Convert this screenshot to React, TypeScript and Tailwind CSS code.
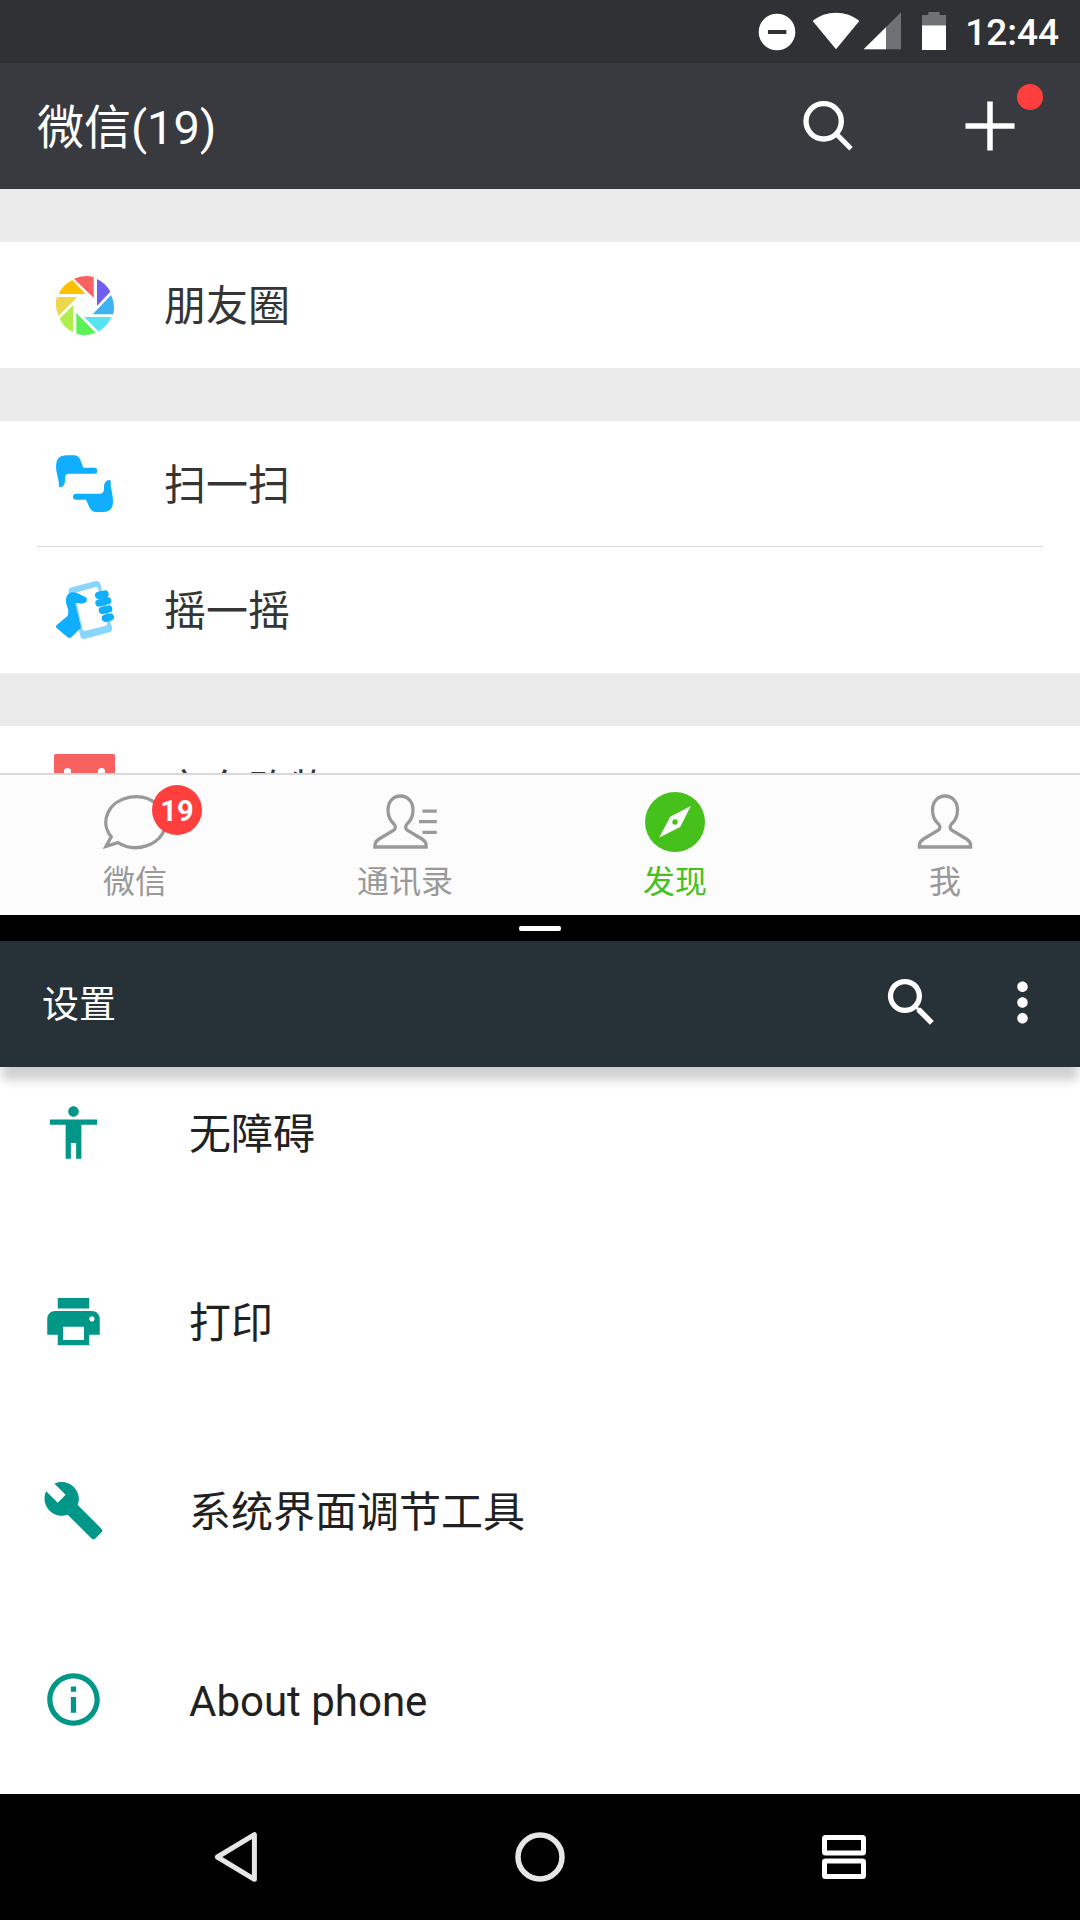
import type { ReactNode } from "react";
import { MdAccessibility, MdBuild, MdInfoOutline, MdMoreVert, MdPrint, MdSearch } from "react-icons/md";

const HEAD_PATH =
  "M27.5 5C19.5 5 15 11.5 15 19c0 6.5 2.6 11.2 6.2 14.3 1.6 1.6 1.6 4.4-.4 5.9L6 48c-3 1.9-4.1 3.6-4.1 6.2V56h51.2v-1.8c0-2.6-1.1-4.3-4.1-6.2l-14.8-8.800c-2-1.5-2-4.3-.4-5.9C37.4 30.2 40 25.5 40 19c0-7.5-4.5-14-12.5-14z";

/* Status bar */

function StatusBar() {
  return (
    <div className="flex h-[63px] shrink-0 items-center justify-end bg-[#303135] pr-[21px] text-white">
      <svg className="mr-4 h-[41px] w-[38px]" viewBox="114 33 114 123" aria-hidden>
        <circle cx="171" cy="96" r="55" fill="#fff" />
        <rect x="144" y="90" width="55" height="12" fill="#303135" />
      </svg>
      <svg className="mr-[3px] h-[41px] w-12" viewBox="276 33 144 123" aria-hidden>
        <path d="M278 63C298 46 322 38 348 38s50 8 70 25l-70 85z" fill="#fff" />
      </svg>
      <svg className="mr-[21px] h-[41px] w-[38px]" viewBox="429 33 114 123" aria-hidden>
        <path d="M543 37v111H431z" fill="#707174" />
        <path d="M498 82v66h-67z" fill="#fff" />
      </svg>
      <svg className="mr-[18px] h-[41px] w-[25px]" viewBox="606 33 75 123" aria-hidden>
        <path d="M625 36h34v9h19v31h-72V45h19z" fill="#707174" />
        <path d="M606 76h72v74h-72z" fill="#fff" />
      </svg>
      <time className="pt-0.5 text-[37px] leading-[44px] font-medium">12:44</time>
    </div>
  );
}

/* Discover list icons */

function MomentsIcon() {
  return (
    <svg className="size-[62px]" viewBox="162 642 186 186" aria-hidden>
      <path d="M222 656A88 88 0 0 1 281 651V713Z" fill="#f76260" />
      <path d="M291 657A88 88 0 0 1 331 695L291 738Z" fill="#6f5ef0" />
      <path d="M333 705A88 88 0 0 1 340 763H278Z" fill="#3eb2f0" />
      <path d="M335 771A88 88 0 0 1 295 814L252 771Z" fill="#56e3f2" />
      <path d="M287 818A88 88 0 0 1 229 821V759Z" fill="#5cf058" />
      <path d="M220 817A88 88 0 0 1 179 776L220 734Z" fill="#b1ee4d" />
      <path d="M176 768A88 88 0 0 1 170 711H232Z" fill="#edd84d" />
      <path d="M176 702A88 88 0 0 1 217 660L257 702Z" fill="#ffc000" />
    </svg>
  );
}

function ScanIcon() {
  return (
    <svg className="size-[62px]" viewBox="162 159 186 186" fill="#10aeff" aria-hidden>
      <path d="M198 166H219C231 166 237 170 241 180L250 203H283A9 9 0 0 1 283 221H206Q195 222 195 233C196 250 193 260 180 262Q177 262 177 258C177 235 168 222 168 197Q168 167 198 166Z" />
      <path d="M309 336H289C278 336 274 331 269 323L258 299H228A9 9 0 0 1 228 281H301Q312 280 312 268C311 252 315 242 328 240Q332 239 332 244C331 266 339 280 339 305Q339 335 309 336Z" />
    </svg>
  );
}

function ShakeIcon() {
  return (
    <svg className="size-[62px]" viewBox="162 537 186 186" aria-hidden>
      <path
        fillRule="evenodd"
        d="M215 562L287 543Q298 541 301 551L336 683Q338 694 328 697L256 716Q244 719 241 708L206 575Q204 565 215 562ZM223 579L248 688Q250 694 256 692L317 677Q323 675 321 669L294 565Q292 560 286 561Z"
        fill="#88d6ff"
      />
      <path
        d="M199 612C195 594 202 578 217 577C225 576 232 579 239 583L257 592Q263 595 260 602C257 611 249 612 225 608L243 683L214 712Q208 716 202 711L170 684Q165 680 170 675L200 650Q205 645 205 638C205 628 202 622 199 612Z"
        fill="#10aeff"
      />
      <path
        d="M296 586l19-4M297 609l26-7M307 631l19-4M316 655l15-4"
        stroke="#10aeff"
        strokeWidth="22"
        strokeLinecap="round"
      />
    </svg>
  );
}

function ShoppingIcon() {
  return (
    <svg className="h-[70px] w-[62px]" viewBox="0 0 62 70" aria-hidden>
      <rect width="61" height="70" rx="1.5" fill="#f76260" />
      <circle cx="13.500" cy="17.500" r="3.600" fill="#fff" />
      <circle cx="47.500" cy="17.500" r="3.600" fill="#fff" />
      <path d="M13.500 18c0 24 34 24 34 0" fill="none" stroke="#fff" strokeWidth="3" />
    </svg>
  );
}

function DiscoverRow({ icon, label, divided }: { icon: ReactNode; label: string; divided?: boolean }) {
  return (
    <li className="relative">
      <button type="button" className="flex h-[126px] w-full items-center gap-12 px-[54px] text-left">
        {icon}
        <span className="pt-1 text-[42px] leading-[50px]">{label}</span>
      </button>
      {divided && <div className="absolute inset-x-[37px] bottom-0 h-px bg-[#d9d9d9]" />}
    </li>
  );
}

/* Tab bar icons */

function ChatIcon() {
  return (
    <svg className="h-[62px] w-16" viewBox="0 0 64 62" fill="none" stroke="#999" strokeWidth="3.3" aria-hidden>
      <path d="M15 51.6L3 55.3L8.300 45.8A29.9 25.4 0 1 1 15 51.6Z" />
    </svg>
  );
}

function ContactsIcon() {
  return (
    <svg className="h-[62px] w-16" viewBox="0 0 64 62" fill="none" stroke="#999" strokeWidth="3.3" aria-hidden>
      <path d={HEAD_PATH} />
      <path d="M49.5 20.2h14.3M46 30.7h17.8M49.5 41.3h14.3" />
    </svg>
  );
}

function CompassIcon() {
  return (
    <svg className="h-[62px] w-16" viewBox="0 0 64 62" aria-hidden>
      <circle cx="32" cy="31" r="30" fill="#46c11b" />
      <path d="M47.8 15L37.2 36L16.2 46.5L27.2 25.7Z" fill="#fff" />
      <circle cx="32" cy="31" r="2.7" fill="#46c11b" />
    </svg>
  );
}

function MeIcon() {
  return (
    <svg className="h-[62px] w-16" viewBox="-4.5 0 64 62" fill="none" stroke="#999" strokeWidth="3.3" aria-hidden>
      <path d={HEAD_PATH} />
    </svg>
  );
}

const TABS = [
  { label: "微信", icon: <ChatIcon />, badge: 19 },
  { label: "通讯录", icon: <ContactsIcon /> },
  { label: "发现", icon: <CompassIcon />, active: true },
  { label: "我", icon: <MeIcon /> },
];

function WeChatPane() {
  return (
    <section className="flex min-h-0 grow basis-0 flex-col bg-[#ebebeb] text-[#353535]">
      <header className="flex h-[126px] shrink-0 items-center bg-[#393a3f] pr-[65px] pl-[37px] text-white">
        <h1 className="grow pt-1 text-[47px] leading-[56px]">微信(19)</h1>
        <div className="flex gap-28">
          <button type="button" aria-label="搜索">
            <svg className="size-[50px]" viewBox="249 303 150 150" fill="none" stroke="#fff" aria-hidden>
              <circle cx="311" cy="364" r="53" strokeWidth="16" />
              <path d="M350 403L393 446" strokeWidth="15" />
            </svg>
          </button>
          <button type="button" aria-label="更多" className="relative">
            <svg className="size-[50px]" viewBox="0 0 50 50" stroke="#fff" strokeWidth="5.5" aria-hidden>
              <path d="M.5 25h49M25 .5v49" />
            </svg>
            <span className="absolute -top-[17px] left-[52px] size-[26px] rounded-full bg-[#ff3e3e]" />
          </button>
        </div>
      </header>

      <main className="flex min-h-0 grow flex-col gap-[53px] overflow-hidden pt-[53px]">
        <ul className="shrink-0 bg-white">
          <DiscoverRow icon={<MomentsIcon />} label="朋友圈" />
        </ul>
        <ul className="shrink-0 bg-white">
          <DiscoverRow icon={<ScanIcon />} label="扫一扫" divided />
          <DiscoverRow icon={<ShakeIcon />} label="摇一摇" />
        </ul>
        <ul className="shrink-0 bg-white">
          <DiscoverRow icon={<ShoppingIcon />} label="京东购物" />
        </ul>
      </main>

      <nav className="flex h-[142px] shrink-0 border-t-2 border-[#d8d8d8] bg-[#fcfcfc]">
        {TABS.map((tab) => (
          <button key={tab.label} type="button" className="flex flex-1 flex-col items-center gap-2 pt-4">
            <span className="relative">
              {tab.icon}
              {tab.badge && (
                <span className="absolute -top-[6px] left-[49px] flex size-[50px] items-center justify-center rounded-full bg-[#ff3e3e] pt-0.5 text-[29px] leading-[34px] font-bold text-white">
                  {tab.badge}
                </span>
              )}
            </span>
            <span className={tab.active ? "text-[32px] leading-[42px] text-[#46c11b]" : "text-[32px] leading-[42px] text-[#999]"}>
              {tab.label}
            </span>
          </button>
        ))}
      </nav>
    </section>
  );
}

const SETTINGS = [
  { label: "无障碍", Icon: MdAccessibility },
  { label: "打印", Icon: MdPrint },
  { label: "系统界面调节工具", Icon: MdBuild },
  { label: "About phone", Icon: MdInfoOutline },
];

function SettingsPane() {
  return (
    <section className="flex min-h-0 grow basis-px flex-col bg-white text-[#212121]">
      <header className="relative z-10 flex h-[126px] shrink-0 items-center bg-[#263238] pr-[26px] pl-[42px] text-white shadow-[0_15px_10px_-2px_rgba(0,0,0,0.19)]">
        <h2 className="grow pt-1 text-[37px] leading-[44px]">设置</h2>
        <div className="flex gap-12 pb-1">
          <button type="button" aria-label="搜索设置">
            <MdSearch size={63} />
          </button>
          <button type="button" aria-label="更多选项">
            <MdMoreVert size={63} />
          </button>
        </div>
      </header>

      {/* scrolled to the end, so the first row slides under the header */}
      <ul className="flex min-h-0 grow flex-col justify-end">
        {SETTINGS.map(({ label, Icon }) => (
          <li key={label} className="shrink-0">
            <button type="button" className="flex h-[189px] w-full items-center gap-[84px] px-[42px] text-left">
              <Icon size={63} color="#009688" />
              <span className="pt-1 text-[42px] leading-[50px]">{label}</span>
            </button>
          </li>
        ))}
      </ul>
    </section>
  );
}

function NavigationBar() {
  return (
    <nav className="flex h-[126px] shrink-0 items-center bg-black px-[84px]">
      <button type="button" aria-label="返回" className="flex flex-1 justify-center">
        <svg className="size-[50px]" viewBox="0 0 50 50" fill="none" stroke="#e6e6e6" strokeWidth="5" strokeLinejoin="round" aria-hidden>
          <path d="M6.4 25L43.4 2.7V47.3Z" />
        </svg>
      </button>
      <button type="button" aria-label="主屏幕" className="flex flex-1 justify-center">
        <svg className="size-[50px]" viewBox="0 0 50 50" fill="none" stroke="#e6e6e6" strokeWidth="5.5" aria-hidden>
          <circle cx="25" cy="25" r="22" />
        </svg>
      </button>
      <button type="button" aria-label="最近任务" className="flex flex-1 justify-center">
        <svg className="size-[50px]" viewBox="0 0 50 50" fill="none" stroke="#fff" strokeWidth="5" aria-hidden>
          <rect x="5.5" y="5.5" width="39" height="15.5" rx="1" />
          <rect x="5.5" y="29" width="39" height="15.5" rx="1" />
        </svg>
      </button>
    </nav>
  );
}

export default function App() {
  return (
    <div lang="zh-CN" className="flex h-screen w-full flex-col overflow-hidden bg-black font-['Roboto','Noto_Sans_CJK_SC',sans-serif]">
      <StatusBar />
      <WeChatPane />
      {/* split-screen drag handle */}
      <div className="flex h-[26px] shrink-0 items-center justify-center bg-black">
        <div className="h-[5px] w-[42px] rounded-xs bg-white" />
      </div>
      <SettingsPane />
      <NavigationBar />
    </div>
  );
}
